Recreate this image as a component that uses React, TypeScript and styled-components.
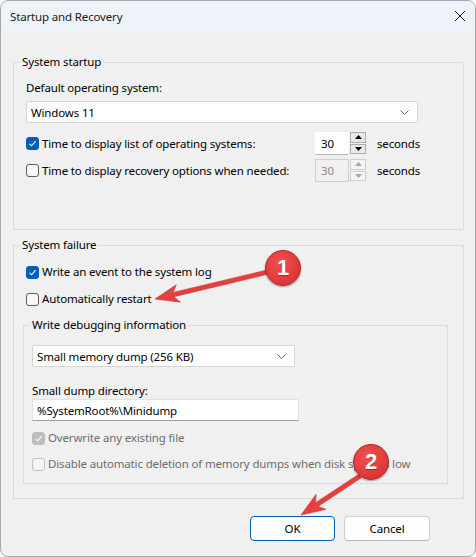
import styled, { createGlobalStyle } from 'styled-components';

const GlobalStyle = createGlobalStyle`
  html, body { margin: 0; padding: 0; background: #ffffff; }
  body {
    font-family: "Noto Sans", "Segoe UI", sans-serif;
    font-size: 11.5px;
    letter-spacing: -0.15px;
    color: #000;
  }
  * { box-sizing: border-box; }
`;

const Window = styled.div`
  position: relative;
  width: 476px;
  height: 557px;
  border: 1px solid #a8a8a8;
  border-radius: 8px;
  overflow: hidden;
  background: #f0f0f0;
  display: flex;
  flex-direction: column;
`;

const TitleBar = styled.div`
  height: 30px;
  flex: none;
  background: #eef2f9;
  display: flex;
  align-items: center;
  justify-content: space-between;
  padding: 0 9px 0 9px;
  color: #1a1a1a;
`;

const CloseButton = styled.div`
  width: 12px;
  height: 12px;
  display: flex;
`;

const Body = styled.div`
  padding: 0 11px 0 12px;
  display: flex;
  flex-direction: column;
`;

const Group = styled.fieldset<{ $top: number }>`
  margin: ${p => p.$top}px 0 0 0;
  padding: 0;
  border: 1px solid #dcdcdc;
  min-width: 0;
`;

const InnerGroup = styled(Group)`
  margin: ${p => p.$top}px 15px 0 -3px;
`;

const Legend = styled.legend`
  padding: 0 2px;
  margin-left: 6px;
  line-height: 16px;
`;

const GroupContent = styled.div<{ $pad: string }>`
  padding: ${p => p.$pad};
  display: flex;
  flex-direction: column;
`;

const Label = styled.div<{ $mt?: number; $disabled?: boolean }>`
  line-height: 16px;
  margin-top: ${p => p.$mt ?? 0}px;
  color: ${p => (p.$disabled ? '#6d6d6d' : '#000')};
  white-space: nowrap;
`;

const Select = styled.div<{ $mt?: number; $width?: number }>`
  margin-top: ${p => p.$mt ?? 0}px;
  width: ${p => (p.$width ? `${p.$width}px` : 'auto')};
  height: 22px;
  background: #ffffff;
  border: 1px solid #d6d6d6;
  border-radius: 2px;
  display: flex;
  align-items: center;
  justify-content: space-between;
  padding: 0 8px 0 4px;
`;

const TextField = styled.div<{ $width: number }>`
  width: ${p => p.$width}px;
  height: 22px;
  background: #ffffff;
  border: 1px solid #e2e2e2;
  border-bottom-color: #a0a0a0;
  display: flex;
  align-items: center;
  padding: 0 4px;
`;

const CheckRow = styled.div<{ $mt?: number }>`
  display: flex;
  align-items: center;
  margin-top: ${p => p.$mt ?? 0}px;
  height: 16px;
`;

const SpinRow = styled.div<{ $mt?: number }>`
  display: grid;
  grid-template-columns: 289px 34px 17px auto;
  align-items: center;
  margin-top: ${p => p.$mt ?? 0}px;
  height: 23px;
`;

const CheckLabel = styled.div`
  display: flex;
  align-items: center;
`;

const Box = styled.span<{ $checked?: boolean; $disabled?: boolean }>`
  width: 13px;
  height: 13px;
  flex: none;
  border-radius: 3px;
  margin-right: 3px;
  display: flex;
  align-items: center;
  justify-content: center;
  background: ${p =>
    p.$checked ? (p.$disabled ? '#bdbdbd' : '#005fb8') : p.$disabled ? '#f5f5f5' : '#f7f7f7'};
  border: 1px solid
    ${p => (p.$checked ? (p.$disabled ? '#bdbdbd' : '#005fb8') : p.$disabled ? '#c2c2c2' : '#5c5c5c')};
`;

const SpinInput = styled.div<{ $disabled?: boolean }>`
  height: 23px;
  display: flex;
  align-items: center;
  padding-left: 5px;
  background: ${p => (p.$disabled ? '#f0f0f0' : '#ffffff')};
  border: 1px solid ${p => (p.$disabled ? '#cfcfcf' : '#ffffff')};
  border-bottom-color: ${p => (p.$disabled ? '#cfcfcf' : '#b8b8b8')};
  color: ${p => (p.$disabled ? '#8a8a8a' : '#000')};
`;

const SpinButtons = styled.div`
  height: 23px;
  display: flex;
  flex-direction: column;
  gap: 1px;
  padding: 0 0 1px 1px;
`;

const SpinArrow = styled.div<{ $disabled?: boolean }>`
  flex: 1;
  border: 1px solid ${p => (p.$disabled ? '#cfcfcf' : '#adadad')};
  background: ${p => (p.$disabled ? '#f4f4f4' : '#e9e9e9')};
  display: flex;
  align-items: center;
  justify-content: center;
`;

const Seconds = styled.div`
  padding-left: 11px;
`;

const ButtonRow = styled.div`
  display: flex;
  justify-content: flex-end;
  gap: 9px;
  margin: 17px 34px 0 0;
`;

const Button = styled.div<{ $primary?: boolean; $width: number }>`
  width: ${p => p.$width}px;
  height: 25px;
  border-radius: 4px;
  background: #fdfdfd;
  border: 1px solid ${p => (p.$primary ? '#005fb8' : '#d0d0d0')};
  border-bottom-color: ${p => (p.$primary ? '#005fb8' : '#b8b8b8')};
  display: flex;
  align-items: center;
  justify-content: center;
`;

const Overlay = styled.svg`
  position: absolute;
  left: -1px;
  top: -1px;
  width: 476px;
  height: 557px;
  pointer-events: none;
`;

const Badge = styled.div<{ $x: number; $y: number }>`
  position: absolute;
  left: ${p => p.$x - 18}px;
  top: ${p => p.$y - 18}px;
  width: 36px;
  height: 36px;
  border-radius: 50%;
  background: radial-gradient(circle at 40% 35%, #f45050 0%, #e23a3a 60%, #c92d2d 100%);
  border: 1px solid #a82424;
  box-shadow: 0 1px 2px rgba(0, 0, 0, 0.35);
  display: flex;
  align-items: center;
  justify-content: center;
  color: #ffffff;
  font-family: "Liberation Sans", Arial, sans-serif;
  font-weight: bold;
  font-size: 22px;
  letter-spacing: 0;
  text-shadow: 0 1px 1px rgba(0, 0, 0, 0.35);
`;

const Check = ({ color = '#fff' }: { color?: string }) => (
  <svg width="9" height="9" viewBox="0 0 9 9">
    <path d="M1.5 4.8 L3.6 6.8 L7.6 2.2" fill="none" stroke={color} strokeWidth="1.1" />
  </svg>
);

const Chevron = () => (
  <svg width="9" height="5" viewBox="0 0 9 5">
    <path d="M0.5 0.5 L4.5 4.5 L8.5 0.5" fill="none" stroke="#606060" strokeWidth="1" />
  </svg>
);

const Tri = ({ up, color }: { up?: boolean; color: string }) => (
  <svg width="7" height="4" viewBox="0 0 7 4">
    <path d={up ? 'M0 4 L3.5 0 L7 4 Z' : 'M0 0 L7 0 L3.5 4 Z'} fill={color} />
  </svg>
);

function arrowPoints(x1: number, y1: number, x2: number, y2: number) {
  const dx = x2 - x1;
  const dy = y2 - y1;
  const len = Math.hypot(dx, dy);
  const ux = dx / len;
  const uy = dy / len;
  const nx = -uy;
  const ny = ux;
  const s = 2.2;
  const L = 24;
  const h = 9;
  const bx = x2 - ux * L;
  const by = y2 - uy * L;
  const jx = x2 - ux * (L - 5);
  const jy = y2 - uy * (L - 5);
  const pts = [
    [x1 + nx * s, y1 + ny * s],
    [jx + nx * s, jy + ny * s],
    [bx + nx * h, by + ny * h],
    [x2, y2],
    [bx - nx * h, by - ny * h],
    [jx - nx * s, jy - ny * s],
    [x1 - nx * s, y1 - ny * s],
  ];
  return pts.map(p => `${p[0].toFixed(1)},${p[1].toFixed(1)}`).join(' ');
}

const CheckItem = ({
  label,
  checked,
  disabled,
}: {
  label: string;
  checked?: boolean;
  disabled?: boolean;
}) => (
  <CheckLabel>
    <Box $checked={checked} $disabled={disabled}>
      {checked && <Check />}
    </Box>
    <Label $disabled={disabled}>{label}</Label>
  </CheckLabel>
);

const Spinner = ({ disabled }: { disabled?: boolean }) => {
  const c = disabled ? '#a8a8a8' : '#000';
  return (
    <>
      <SpinInput $disabled={disabled}>30</SpinInput>
      <SpinButtons>
        <SpinArrow $disabled={disabled}>
          <Tri up color={c} />
        </SpinArrow>
        <SpinArrow $disabled={disabled}>
          <Tri color={c} />
        </SpinArrow>
      </SpinButtons>
      <Seconds>seconds</Seconds>
    </>
  );
};

export default function App() {
  return (
    <>
      <GlobalStyle />
      <Window>
        <TitleBar>
          <span>Startup and Recovery</span>
          <CloseButton>
            <svg width="12" height="12" viewBox="0 0 12 12">
              <path d="M1 1 L11 11 M11 1 L1 11" stroke="#1a1a1a" strokeWidth="1" />
            </svg>
          </CloseButton>
        </TitleBar>
        <Body>
          <Group $top={23}>
            <Legend>System startup</Legend>
            <GroupContent $pad="10px 45px 47px 12px">
              <Label>Default operating system:</Label>
              <Select $mt={5}>
                <span>Windows 11</span>
                <Chevron />
              </Select>
              <SpinRow $mt={9}>
                <CheckItem label="Time to display list of operating systems:" checked />
                <Spinner />
              </SpinRow>
              <SpinRow $mt={4}>
                <CheckItem label="Time to display recovery options when needed:" />
                <Spinner disabled />
              </SpinRow>
            </GroupContent>
          </Group>
          <Group $top={7}>
            <Legend>System failure</Legend>
            <GroupContent $pad="11px 0 14px 12px">
              <CheckRow>
                <CheckItem label="Write an event to the system log" checked />
              </CheckRow>
              <CheckRow $mt={11}>
                <CheckItem label="Automatically restart" />
              </CheckRow>
              <InnerGroup $top={10}>
                <Legend>Write debugging information</Legend>
                <GroupContent $pad="12px 0 11px 8px">
                  <Select $width={263}>
                    <span>Small memory dump (256 KB)</span>
                    <Chevron />
                  </Select>
                  <Label $mt={16}>Small dump directory:</Label>
                  <TextField $width={267}>%SystemRoot%\Minidump</TextField>
                  <CheckRow $mt={9}>
                    <CheckItem label="Overwrite any existing file" checked disabled />
                  </CheckRow>
                  <CheckRow $mt={10}>
                    <CheckItem
                      label="Disable automatic deletion of memory dumps when disk space is low"
                      disabled
                    />
                  </CheckRow>
                </GroupContent>
              </InnerGroup>
            </GroupContent>
          </Group>
          <ButtonRow>
            <Button $primary $width={85}>
              OK
            </Button>
            <Button $width={86}>Cancel</Button>
          </ButtonRow>
        </Body>
        <Overlay viewBox="0 0 476 557">
          <polygon points={arrowPoints(268, 272, 155, 299)} fill="#e5403e" stroke="#c93331" strokeWidth="0.6" />
          <polygon points={arrowPoints(360, 476, 301, 515)} fill="#e5403e" stroke="#c93331" strokeWidth="0.6" />
        </Overlay>
        <Badge $x={282} $y={267}>1</Badge>
        <Badge $x={370} $y={461}>2</Badge>
      </Window>
    </>
  );
}
